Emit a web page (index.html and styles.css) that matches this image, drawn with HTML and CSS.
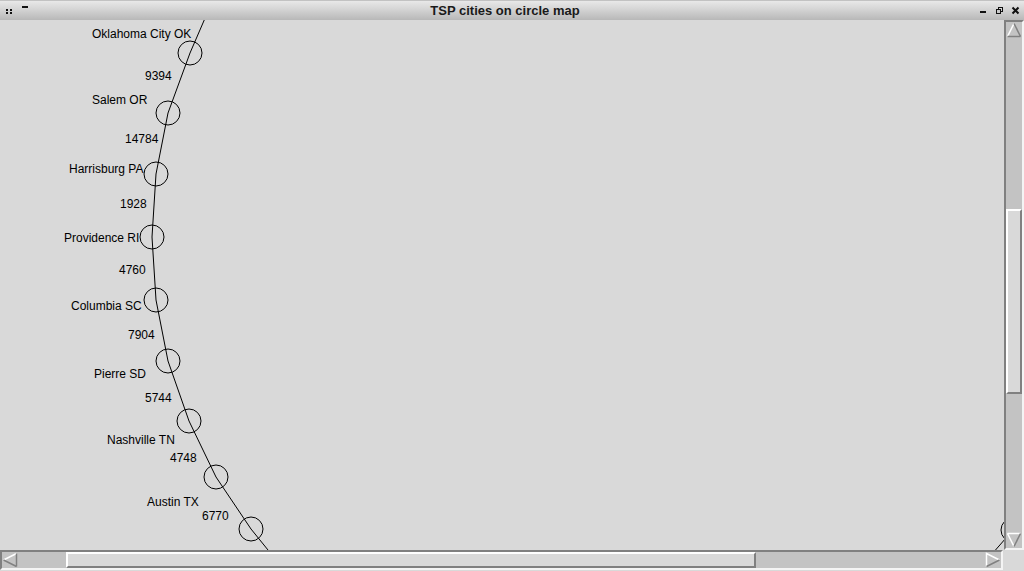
FILE: index.html
```html
<!DOCTYPE html>
<html>
<head>
<meta charset="utf-8">
<title>TSP cities on circle map</title>
<link rel="stylesheet" href="styles.css">
</head>
<body>
<div class="window">
  <div class="titlebar">
    <div class="tb-left">
      <svg width="36" height="19" viewBox="0 0 36 19">
        <rect x="6" y="8" width="2" height="2" fill="#111"/>
        <rect x="10" y="8" width="2" height="2" fill="#111"/>
        <rect x="6" y="11" width="2" height="2" fill="#111"/>
        <rect x="10" y="11" width="2" height="2" fill="#111"/>
        <rect x="22" y="5" width="6" height="2" fill="#111"/>
      </svg>
    </div>
    <div class="title">TSP cities on circle map</div>
    <div class="tb-right">
      <svg width="50" height="19" viewBox="974 1 50 19">
        <rect x="980" y="11" width="6" height="2" fill="#111"/>
        <rect x="998.5" y="7.5" width="4" height="4" fill="none" stroke="#111" stroke-width="1"/>
        <rect x="996.5" y="9.5" width="4" height="4" fill="#c9c9c9" stroke="#111" stroke-width="1"/>
        <path d="M1012.5 7.5 L1018.5 13.5 M1018.5 7.5 L1012.5 13.5" stroke="#111" stroke-width="2"/>
      </svg>
    </div>
  </div>
  <div class="main">
    <div class="canvas">
      <svg class="map" width="1004" height="530" viewBox="0 20 1004 530">
        <polyline points="206,16 190,53 168,113 156,174 152,237 156,300 168,361 189,421 216,477 251,529 268,550" fill="none" stroke="#000" stroke-width="1"/>
        <line x1="1013" y1="530" x2="985" y2="562" stroke="#000" stroke-width="1"/>
        <g fill="none" stroke="#000" stroke-width="1">
          <circle cx="190" cy="53" r="12"/>
          <circle cx="168" cy="113" r="12"/>
          <circle cx="156" cy="174" r="12"/>
          <circle cx="152" cy="237" r="12"/>
          <circle cx="156" cy="300" r="12"/>
          <circle cx="168" cy="361" r="12"/>
          <circle cx="189" cy="421" r="12"/>
          <circle cx="216" cy="477" r="12"/>
          <circle cx="251" cy="529" r="12"/>
          <circle cx="1013" cy="530" r="12"/>
        </g>
        <g class="labels">
          <text x="92" y="38">Oklahoma City OK</text>
          <text x="145" y="80">9394</text>
          <text x="92" y="104">Salem OR</text>
          <text x="125" y="143">14784</text>
          <text x="69" y="173">Harrisburg PA</text>
          <text x="120" y="208">1928</text>
          <text x="64" y="242">Providence RI</text>
          <text x="119" y="274">4760</text>
          <text x="71" y="310">Columbia SC</text>
          <text x="128" y="339">7904</text>
          <text x="94" y="378">Pierre SD</text>
          <text x="145" y="402">5744</text>
          <text x="107" y="444">Nashville TN</text>
          <text x="170" y="462">4748</text>
          <text x="147" y="506">Austin TX</text>
          <text x="202" y="520">6770</text>
        </g>
      </svg>
    </div>
    <div class="vscroll">
      <div class="arrow">
        <svg width="16" height="16" viewBox="0 0 16 16">
          <polygon points="8,1.5 14.5,14.5 1.5,14.5" fill="#c3c3c3"/>
          <path d="M1.5 14.5 L8 1.5" stroke="#fff" stroke-width="1.5"/>
          <path d="M8 1.5 L14.5 14.5" stroke="#808080" stroke-width="1.5"/>
          <path d="M1.5 14.5 H14.5" stroke="#808080" stroke-width="1.5"/>
        </svg>
      </div>
      <div class="vtrough">
        <div class="vthumb"></div>
      </div>
      <div class="arrow">
        <svg width="16" height="16" viewBox="0 0 16 16">
          <polygon points="1.5,1.5 14.5,1.5 8,14.5" fill="#c3c3c3"/>
          <path d="M1.5 1.5 H14.5" stroke="#fff" stroke-width="1.5"/>
          <path d="M1.5 1.5 L8 14.5" stroke="#fff" stroke-width="1.5"/>
          <path d="M14.5 1.5 L8 14.5" stroke="#808080" stroke-width="1.5"/>
        </svg>
      </div>
    </div>
  </div>
  <div class="bottom">
    <div class="hscroll">
      <div class="arrow">
        <svg width="16" height="16" viewBox="0 0 16 16">
          <polygon points="1.5,8 14.5,1.5 14.5,14.5" fill="#c3c3c3"/>
          <path d="M1.5 8 L14.5 1.5" stroke="#fff" stroke-width="1.5"/>
          <path d="M1.5 8 L14.5 14.5" stroke="#808080" stroke-width="1.5"/>
          <path d="M14.5 1.5 V14.5" stroke="#808080" stroke-width="1.5"/>
        </svg>
      </div>
      <div class="htrough">
        <div class="hthumb"></div>
      </div>
      <div class="arrow">
        <svg width="16" height="16" viewBox="0 0 16 16">
          <polygon points="1.5,1.5 14.5,8 1.5,14.5" fill="#c3c3c3"/>
          <path d="M1.5 14.5 V1.5 L14.5 8" stroke="#fff" stroke-width="1.5" fill="none"/>
          <path d="M14.5 8 L1.5 14.5" stroke="#808080" stroke-width="1.5"/>
        </svg>
      </div>
    </div>
    <div class="corner"></div>
  </div>
</div>
</body>
</html>
```

FILE: styles.css
```css
html, body {
  margin: 0;
  padding: 0;
  background: #d9d9d9;
}

.window {
  width: 1024px;
  height: 571px;
  display: flex;
  flex-direction: column;
  overflow: hidden;
  background: #d9d9d9;
  font-family: "Liberation Sans", Arial, sans-serif;
}

.titlebar {
  height: 19px;
  border-top: 1px solid #c2c2c2;
  background: linear-gradient(#e8e8e8, #d6d6d6 40%, #b8b8b8);
  display: flex;
  align-items: center;
  flex: none;
}

.tb-left {
  width: 36px;
  height: 19px;
  flex: none;
}

.tb-right {
  width: 50px;
  height: 19px;
  flex: none;
}

.tb-left svg, .tb-right svg {
  display: block;
}

.title {
  flex: 1;
  text-align: center;
  font-weight: bold;
  font-size: 13px;
  color: #1a1a1a;
  line-height: 19px;
}

.main {
  display: flex;
  height: 530px;
  flex: none;
}

.canvas {
  width: 1004px;
  height: 530px;
  overflow: hidden;
  flex: none;
}

.map {
  display: block;
}

.labels text {
  font-family: "Liberation Sans", Arial, sans-serif;
  font-size: 12px;
  fill: #000;
}

.vscroll {
  width: 16px;
  height: 526px;
  border-style: solid;
  border-width: 2px;
  border-color: #808080 #f4f4f4 #f4f4f4 #808080;
  background: #c3c3c3;
  display: flex;
  flex-direction: column;
  flex: none;
}

.arrow {
  width: 16px;
  height: 16px;
  flex: none;
}

.arrow svg {
  display: block;
}

.vtrough {
  flex: 1;
  display: flex;
  flex-direction: column;
}

.vthumb {
  margin-top: 171px;
  height: 181px;
  background: #d9d9d9;
  border-style: solid;
  border-width: 2px;
  border-color: #ffffff #808080 #808080 #ffffff;
}

.bottom {
  display: flex;
  height: 21px;
  flex: none;
}

.hscroll {
  width: 999px;
  height: 16px;
  border-style: solid;
  border-width: 2px;
  border-color: #808080 #f4f4f4 #f4f4f4 #808080;
  background: #c3c3c3;
  display: flex;
  flex: none;
}

.htrough {
  flex: 1;
  display: flex;
}

.hthumb {
  margin-left: 48px;
  width: 686px;
  background: #d9d9d9;
  border-style: solid;
  border-width: 2px;
  border-color: #ffffff #808080 #808080 #ffffff;
}

.corner {
  flex: 1;
  background: #d9d9d9;
}
```
